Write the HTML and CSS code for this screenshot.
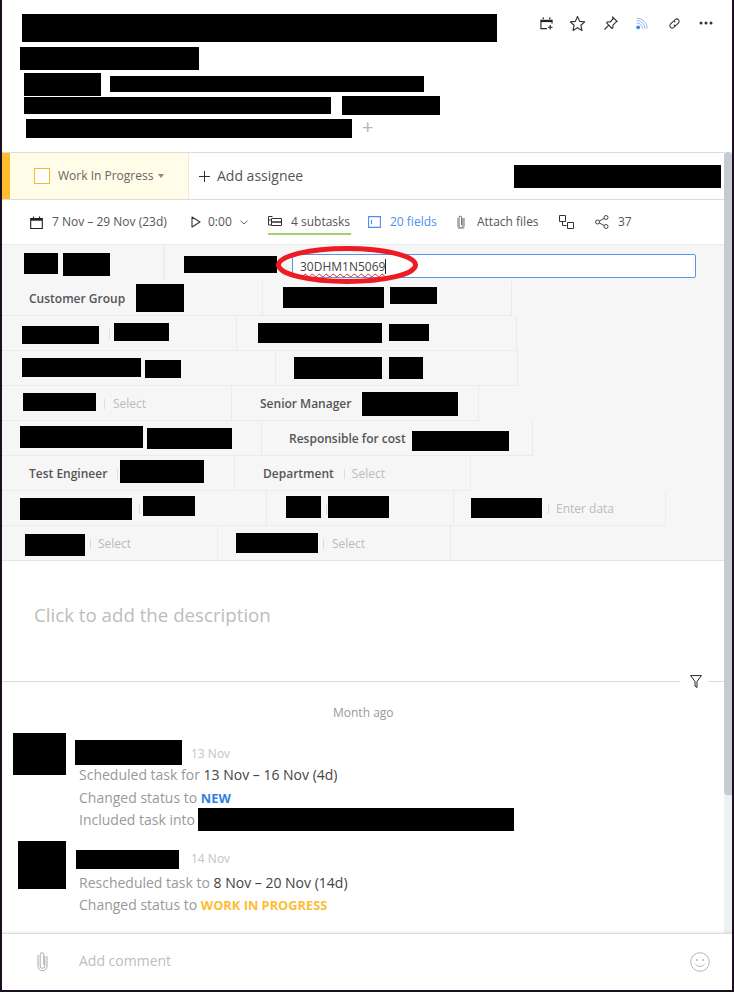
FILE: index.html
```html
<!DOCTYPE html>
<html lang="en">
<head>
<meta charset="utf-8">
<title>Task</title>
<link rel="stylesheet" href="styles.css">
</head>
<body>
<div class="panel">
  <header class="head">
    <div class="title">
      <div class="t-row t-a"><i class="bar tb1"></i></div>
      <div class="t-row t-b"><i class="bar tb2"></i></div>
      <div class="t-row t-c"><i class="bar tb3"></i><i class="bar tb4"></i></div>
      <div class="t-row t-d"><i class="bar tb5"></i><i class="bar tb6"></i></div>
      <div class="t-row t-e"><i class="bar tb7"></i><span class="plus">+</span></div>
    </div>
    <div class="actions">
      <svg class="ic a1" viewBox="0 0 14 14" width="13" height="13"><path d="M1 3h12v2.500H1z" fill="#222"/><path d="M3.500 .5v2M10.500 .5v2" stroke="#222" stroke-width="1.400"/><path d="M1 3v9.500h6.500M13 3v4" fill="none" stroke="#222" stroke-width="1.200"/><path d="M11 8.500v5M8.500 11h5" stroke="#222" stroke-width="1.200"/></svg>
      <svg class="ic a2" viewBox="0 0 16 16" width="17" height="17"><path d="M8 1.500l2 4.500 4.800.5-3.600 3.200 1 4.800L8 12.100 3.800 14.500l1-4.800L1.200 6.500 6 6z" fill="none" stroke="#333" stroke-width="1.100" stroke-linejoin="round"/></svg>
      <svg class="ic a3" viewBox="0 0 16 16" width="16" height="16"><path d="M9.500 1.800l4.700 4.700-1.300.6-3 3 .1 2.500-1 .9L3.600 7.900l.9-1 2.500.1 3-3zM5.800 10.200L1.500 14.500" fill="none" stroke="#333" stroke-width="1.100" stroke-linejoin="round"/></svg>
      <svg class="ic a4" viewBox="0 0 14 14" width="12" height="13"><circle cx="2.500" cy="11.500" r="2.200" fill="#3f83f0"/><path d="M1 6.500a6.500 6.500 0 0 1 6.500 6.500M1 3.500A9.500 9.500 0 0 1 10.500 13M1 .8A12.200 12.200 0 0 1 13.200 13" fill="none" stroke="#7fabf5" stroke-width="1"/></svg>
      <svg class="ic a5" viewBox="0 0 14 14" width="13" height="13"><path d="M6 4.500l2-2a2.600 2.600 0 0 1 3.600 3.600L9.500 8.300a2.600 2.600 0 0 1-3.400.3M8 9.500l-2 2a2.600 2.600 0 0 1-3.600-3.600l2.100-2.200a2.600 2.600 0 0 1 3.400-.3" fill="none" stroke="#333" stroke-width="1.100"/></svg>
      <svg class="ic a6" viewBox="0 0 14 4" width="14" height="4"><circle cx="2" cy="2" r="1.500" fill="#333"/><circle cx="7" cy="2" r="1.500" fill="#333"/><circle cx="12" cy="2" r="1.500" fill="#333"/></svg>
    </div>
  </header>

  <div class="scroll">
    <main class="content">
      <section class="status">
        <div class="state">
          <span class="check"></span>
          <span class="state-name">Work In Progress</span>
          <span class="caret"></span>
        </div>
        <div class="assignee">
          <svg viewBox="0 0 12 12" width="11" height="11"><path d="M6 0v12M0 6h12" stroke="#333" stroke-width="1.100"/></svg>
          <span>Add assignee</span>
        </div>
        <i class="bar st1"></i>
      </section>

      <nav class="tools">
        <div class="tool t-date">
          <svg viewBox="0 0 13 13" width="13" height="13"><path d="M.7 2.500h11.600v10H.7z" fill="none" stroke="#222" stroke-width="1.100"/><path d="M.7 2.500h11.600v2.200H.7z" fill="#222"/><path d="M3.500 .5v2M9.500 .5v2" stroke="#222" stroke-width="1.200"/></svg>
          <span>7 Nov – 29 Nov (23d)</span>
        </div>
        <div class="tool t-time">
          <svg viewBox="0 0 10 12" width="10" height="12"><path d="M1 1l8 5-8 5z" fill="none" stroke="#333" stroke-width="1.100" stroke-linejoin="round"/></svg>
          <span>0:00</span>
          <svg class="chev" viewBox="0 0 8 5" width="8" height="5"><path d="M.5 .7L4 4l3.500-3.300" fill="none" stroke="#666" stroke-width="1"/></svg>
        </div>
        <div class="tool t-sub">
          <svg viewBox="0 0 14 12" width="14" height="12"><path d="M.5 .5h4M.5 .5v8.500h3M.5 4h3M3.500 2.500h10v3.500h-10zM3.500 6h10v3.500h-10z" fill="none" stroke="#333" stroke-width="1"/></svg>
          <span>4 subtasks</span>
        </div>
        <div class="tool t-fields">
          <svg viewBox="0 0 13 12" width="13" height="12"><path d="M.6 .6h11.800v10.800H.6zM3.500 4v4" fill="none" stroke="#4d8ff0" stroke-width="1.100"/></svg>
          <span>20 fields</span>
        </div>
        <div class="tool t-attach">
          <svg viewBox="0 0 8 14" width="8" height="14"><path d="M6 3v8a2 2 0 0 1-4 0V2.500a1.300 1.300 0 0 1 2.600 0V10" fill="none" stroke="#555" stroke-width=".9"/><path d="M7.300 3v8a3.300 3.300 0 0 1-6.600 0V3" fill="none" stroke="#777" stroke-width=".7"/></svg>
          <span>Attach files</span>
        </div>
        <div class="tool t-link">
          <svg viewBox="0 0 15 14" width="15" height="14"><path d="M.5 .5h6v6h-6zM8.500 7.500h6v6h-6zM3.500 6.500v4h4" fill="none" stroke="#333" stroke-width="1"/></svg>
        </div>
        <div class="tool t-share">
          <svg viewBox="0 0 14 14" width="14" height="14"><circle cx="2.500" cy="7" r="2" fill="none" stroke="#444"/><circle cx="11" cy="2.500" r="2" fill="none" stroke="#444"/><circle cx="11" cy="11.500" r="2" fill="none" stroke="#444"/><path d="M4.300 6l5-2.600M4.300 8l5 2.600" stroke="#444"/></svg>
          <span>37</span>
        </div>
      </nav>

      <section class="fields">
        <div class="row row-first">
          <div class="cell c1a"><i class="bar f1"></i><i class="bar f2"></i></div>
          <div class="cell-edit">
            <i class="bar f3"></i>
            <div class="input"><span class="typed">30DHM1N5069</span><span class="cursor"></span></div>
            <svg class="mark" viewBox="0 0 142 38" width="142" height="38"><ellipse cx="71" cy="19" rx="68.500" ry="16.500" fill="none" stroke="#ed1c24" stroke-width="5"/></svg>
          </div>
        </div>
        <div class="row">
          <div class="cell c2a"><span class="label l-cg">Customer Group</span><i class="bar f4"></i></div>
          <div class="cell c2b"><i class="bar f5"></i><i class="bar f6"></i></div>
        </div>
        <div class="row">
          <div class="cell c3a"><i class="bar f7"></i><span class="sep s3"></span><i class="bar f8"></i></div>
          <div class="cell c3b"><i class="bar f9"></i><i class="bar f10"></i></div>
        </div>
        <div class="row">
          <div class="cell c4a"><i class="bar f11"></i><i class="bar f12"></i></div>
          <div class="cell c4b"><i class="bar f13"></i><i class="bar f14"></i></div>
        </div>
        <div class="row">
          <div class="cell c5a"><i class="bar f15"></i><span class="sep s5"></span><span class="hint">Select</span></div>
          <div class="cell c5b"><span class="label l-sm">Senior Manager</span><i class="bar f16"></i></div>
        </div>
        <div class="row">
          <div class="cell c6a"><i class="bar f17"></i><i class="bar f18"></i></div>
          <div class="cell c6b"><span class="label l-rc">Responsible for cost</span><i class="bar f19"></i></div>
        </div>
        <div class="row">
          <div class="cell c7a"><span class="label l-te">Test Engineer</span><span class="sep s7"></span><i class="bar f20"></i></div>
          <div class="cell c7b"><span class="label l-dp">Department</span><span class="sep s7b"></span><span class="hint">Select</span></div>
        </div>
        <div class="row">
          <div class="cell c8a"><i class="bar f21"></i><span class="sep s8"></span><i class="bar f22"></i></div>
          <div class="cell c8b"><i class="bar f23"></i><span class="sep s8b"></span><i class="bar f24"></i></div>
          <div class="cell c8c"><i class="bar f25"></i><span class="sep s8c"></span><span class="hint">Enter data</span></div>
        </div>
        <div class="row">
          <div class="cell c9a"><i class="bar f26"></i><span class="sep s9"></span><span class="hint">Select</span></div>
          <div class="cell c9b"><i class="bar f27"></i><span class="sep s9b"></span><span class="hint">Select</span></div>
        </div>
      </section>

      <section class="description">Click to add the description</section>

      <div class="rule">
        <span class="rule-line"></span>
        <svg viewBox="0 0 12 13" width="12" height="13"><path d="M.6 .6h10.800L7 6.500V12.500L5 11V6.500z" fill="none" stroke="#222" stroke-width="1" stroke-linejoin="round"/></svg>
        <span class="rule-end"></span>
      </div>

      <div class="when">Month ago</div>

      <article class="entry e1">
        <i class="bar av1"></i>
        <div class="entry-body">
          <div class="who"><i class="bar n1"></i><time>13 Nov</time></div>
          <p>Scheduled task for <b>13 Nov – 16 Nov (4d)</b></p>
          <p>Changed status to <strong class="new">NEW</strong></p>
          <p class="incl">Included task into<i class="bar n3"></i></p>
        </div>
      </article>

      <article class="entry e2">
        <i class="bar av2"></i>
        <div class="entry-body">
          <div class="who who2"><i class="bar n2"></i><time>14 Nov</time></div>
          <p>Rescheduled task to <b>8 Nov – 20 Nov (14d)</b></p>
          <p>Changed status to <strong class="wip">WORK IN PROGRESS</strong></p>
        </div>
      </article>
    </main>
    <div class="scrollbar"><div class="thumb"></div></div>
  </div>

  <footer class="comment">
    <svg class="clip" viewBox="0 0 11 20" width="11" height="20"><path d="M7.800 5v10a2.300 2.300 0 0 1-4.600 0V3.500a1.800 1.800 0 0 1 3.600 0V14" fill="none" stroke="#aaa" stroke-width="1"/><path d="M10 5v10.200a4.500 4.500 0 0 1-9 0V4" fill="none" stroke="#aaa" stroke-width="1"/></svg>
    <span class="add">Add comment</span>
    <svg class="smile" viewBox="0 0 20 20" width="20" height="20"><circle cx="10" cy="10" r="9.300" fill="none" stroke="#b5b5b5" stroke-width="1"/><circle cx="6.800" cy="8" r="1" fill="#b5b5b5"/><circle cx="13.200" cy="8" r="1" fill="#b5b5b5"/><path d="M5.500 12.300c2.500 2.800 6.500 2.800 9 0" fill="none" stroke="#b5b5b5" stroke-width="1"/></svg>
  </footer>
</div>
</body>
</html>
```

FILE: styles.css
```css
* { box-sizing: border-box; }
html, body { margin: 0; height: 992px; overflow: hidden; }
body { background: #1c1020; font-family: "Open Sans", "Liberation Sans", sans-serif; color: #555; font-size: 12px; }
.panel { margin-left: 2px; width: 730px; height: 990px; background: #fff; display: flex; flex-direction: column; }
.bar { display: block; background: #000; flex: none; }

/* header */
.head { height: 152px; flex: none; display: flex; justify-content: space-between; }
.title { width: 520px; }
.t-row { display: flex; align-items: flex-start; }
.t-a { margin: 14px 0 0 20px; }
.t-b { margin: 5px 0 0 18px; }
.t-c { margin: 3px 0 0 22px; }
.t-d { margin: 0 0 0 22px; }
.t-e { margin: 4px 0 0 24px; }
.tb1 { width: 475px; height: 28px; }
.tb2 { width: 179px; height: 23px; }
.tb3 { width: 77px; height: 23px; }
.tb4 { width: 314px; height: 16px; margin: 3px 0 0 9px; }
.tb5 { width: 307px; height: 17px; margin: 1px 0 0 0; }
.tb6 { width: 98px; height: 19px; margin-left: 11px; }
.tb7 { width: 326px; height: 19px; }
.plus { margin-left: 10px; font-size: 20px; line-height: 16px; color: #b5b5b5; }
.actions { display: flex; align-items: center; height: 16px; margin: 15px 19px 0 0; }
.ic { display: block; flex: none; }
.a2 { margin-left: 16px; }
.a3 { margin-left: 17px; }
.a4 { margin-left: 17px; }
.a5 { margin-left: 20px; }
.a6 { margin-left: 18px; }

/* scrolling part */
.scroll { height: 781px; flex: none; display: flex; overflow: hidden; }
.content { width: 722px; flex: none; }
.scrollbar { width: 8px; flex: none; background: #eef0f2; }
.thumb { height: 643px; background: #c6cad2; border-radius: 4px 4px 0 4px; }

/* status */
.status { height: 48px; display: flex; align-items: center; border-top: 1px solid #dcdcdc; border-bottom: 1px solid #dcdcdc; }
.state { width: 187px; height: 100%; display: flex; align-items: center; background: #fffce8; border-left: 8px solid #fdbd2d; border-right: 1px solid #f1eecf; padding-left: 24px; }
.check { width: 16px; height: 16px; border: 1px solid #f7bb2e; background: #fff; }
.state-name { margin: 0 0 2px 8px; color: #666; }
.caret { margin-left: 5px; border: 3px solid transparent; border-top: 4px solid #888; border-bottom: 0; }
.assignee { display: flex; align-items: center; margin-left: 10px; font-size: 14px; color: #555; width: 315px; }
.assignee span { margin: 0 0 2px 7px; }
.st1 { width: 207px; height: 23px; }

/* tools */
.tools { height: 45px; display: flex; align-items: center; padding-left: 28px; border-bottom: 1px solid #ececec; color: #555; }
.tool { display: flex; align-items: center; height: 100%; flex: none; }
.tool span { white-space: nowrap; margin-bottom: 2px; }
.t-date { width: 161px; }
.t-date span { margin-left: 9px; }
.t-time { width: 77px; }
.t-time span { margin-left: 7px; }
.chev { margin-left: 8px; }
.t-sub { width: 83px; position: relative; margin-right: 17px; }
.t-sub::after { content: ""; position: absolute; left: 0; right: 0; bottom: 9px; height: 2px; background: #a3d06b; }
.t-sub span { margin-left: 9px; }
.t-fields { width: 89px; color: #4d8ff0; }
.t-fields span { margin-left: 9px; }
.t-attach { width: 102px; }
.t-attach span { margin-left: 12px; }
.t-link { width: 36px; }
.t-share span { margin-left: 9px; }

/* fields */
.fields { height: 316px; background: #f6f6f6; border-bottom: 1px solid #e4e4e4; }
.row { display: flex; height: 35px; }
.row-first { height: 36px; position: relative; }
.cell { display: flex; align-items: flex-start; height: 35px; flex: none; border-right: 1px solid #ebebeb; border-bottom: 1px solid #ebebeb; }
.label { line-height: 36px; font-weight: 600; color: #555; white-space: nowrap; }
.hint { line-height: 36px; color: #bbb; white-space: nowrap; }
.sep { width: 1px; height: 10px; margin-top: 13px; background: #ddd; flex: none; }

.c1a { width: 161px; height: 36px; border: 0; box-shadow: 2px 0 2px -1px #e6e6e6; }
.f1 { width: 34px; height: 21px; margin: 8px 0 0 22px; }
.f2 { width: 47px; height: 23px; margin: 8px 0 0 5px; }
.cell-edit { flex: 1; display: flex; align-items: flex-start; position: relative; }
.f3 { width: 93px; height: 17px; margin: 11px 0 0 21px; }
.input { width: 404px; height: 24px; margin: 9px 0 0 15px; background: #fff; border: 1px solid #5b95ea; border-radius: 2px; padding-left: 7px; display: flex; align-items: center; color: #444; }
.typed { text-decoration: underline wavy #e02020 1px; text-underline-offset: 2px; text-decoration-skip-ink: none; }
.cursor { width: 1px; height: 15px; background: #222; }
.mark { position: absolute; left: 113px; top: 1px; }

.c2a { width: 261px; }
.l-cg { margin-left: 27px; }
.f4 { width: 48px; height: 28px; margin: 3px 0 0 11px; }
.c2b { width: 249px; }
.f5 { width: 101px; height: 21px; margin: 6px 0 0 20px; }
.f6 { width: 47px; height: 17px; margin: 6px 0 0 6px; }

.c3a { width: 235px; }
.f7 { width: 77px; height: 18px; margin: 10px 0 0 20px; }
.s3 { margin-left: 10px; }
.f8 { width: 55px; height: 18px; margin: 7px 0 0 4px; }
.c3b { width: 280px; }
.f9 { width: 124px; height: 20px; margin: 7px 0 0 21px; }
.f10 { width: 40px; height: 17px; margin: 8px 0 0 7px; }

.c4a { width: 274px; }
.f11 { width: 119px; height: 19px; margin: 7px 0 0 20px; }
.f12 { width: 36px; height: 18px; margin: 9px 0 0 4px; }
.c4b { width: 242px; }
.f13 { width: 88px; height: 22px; margin: 6px 0 0 18px; }
.f14 { width: 34px; height: 22px; margin: 6px 0 0 7px; }

.c5a { width: 230px; }
.f15 { width: 73px; height: 18px; margin: 7px 0 0 21px; }
.s5 { margin-left: 8px; margin-right: 8px; }
.c5b { width: 247px; }
.l-sm { margin-left: 28px; }
.f16 { width: 96px; height: 24px; margin: 6px 0 0 11px; }

.c6a { width: 260px; }
.f17 { width: 123px; height: 22px; margin: 5px 0 0 18px; }
.f18 { width: 85px; height: 21px; margin: 7px 0 0 4px; }
.c6b { width: 271px; }
.l-rc { margin-left: 27px; }
.f19 { width: 97px; height: 20px; margin: 10px 0 0 6px; }

.c7a { width: 233px; }
.l-te { margin-left: 27px; }
.s7 { margin-left: 10px; }
.f20 { width: 84px; height: 23px; margin: 4px 0 0 2px; }
.c7b { width: 236px; }
.l-dp { margin-left: 28px; }
.s7b { margin-left: 10px; margin-right: 7px; }

.c8a { width: 265px; }
.f21 { width: 112px; height: 22px; margin: 7px 0 0 18px; }
.s8 { margin-left: 7px; }
.f22 { width: 52px; height: 20px; margin: 5px 0 0 3px; }
.c8b { width: 187px; }
.f23 { width: 35px; height: 22px; margin: 5px 0 0 19px; }
.s8b { margin-left: 5px; }
.f24 { width: 61px; height: 22px; margin: 5px 0 0 1px; }
.c8c { width: 212px; }
.f25 { width: 71px; height: 20px; margin: 7px 0 0 17px; }
.s8c { margin-left: 6px; margin-right: 7px; }

.c9a { width: 216px; border-bottom: 0; }
.f26 { width: 60px; height: 22px; margin: 8px 0 0 23px; }
.s9 { margin-left: 5px; margin-right: 7px; }
.c9b { width: 233px; border-bottom: 0; }
.f27 { width: 82px; height: 20px; margin: 7px 0 0 18px; }
.s9b { margin-left: 5px; margin-right: 8px; }

/* description */
.description { height: 120px; padding: 42px 0 0 32px; font-size: 18.700px; line-height: 24px; color: #bdbdbd; }

/* activity */
.rule { display: flex; align-items: center; height: 13px; margin-top: -6px; }
.rule-line { width: 678px; height: 1px; background: #dcdcdc; }
.rule svg { margin-left: 10px; flex: none; }
.rule-end { flex: 1; height: 1px; margin-left: 6px; background: #dcdcdc; }
.when { margin-top: 17px; padding-left: 331px; font-size: 12px; line-height: 16px; color: #999; }
.entry { display: flex; align-items: flex-start; }
.e1 { margin: 12px 0 0 11px; height: 108px; }
.e2 { margin-left: 16px; }
.av1 { width: 53px; height: 42px; }
.av2 { width: 48px; height: 48px; }
.entry-body { margin-left: 9px; font-size: 14px; }
.e2 .entry-body { margin-left: 10px; }
.who { display: flex; align-items: flex-end; height: 32px; padding-top: 7px; margin-bottom: -1px; }
.who2 { height: 28px; padding-top: 9px; margin-bottom: 3px; }
.n1 { width: 107px; height: 25px; }
.n2 { width: 103px; height: 19px; }
time { margin: 0 0 2px 9px; font-size: 12px; line-height: 18px; color: #c4c4c4; }
.who2 time { margin: 0 0 1px 12px; }
.entry p { margin: 0 0 0 4px; height: 22.500px; line-height: 22px; color: #999; white-space: nowrap; }
.e2 p { margin-left: 3px; height: 22px; }
.entry-body p.incl { display: flex; }
.entry b { font-weight: 400; color: #444; }
.new { color: #2f80e0; font-weight: 700; font-size: 12.800px; }
.wip { color: #fdbd33; font-weight: 700; font-size: 12.800px; }
.n3 { width: 316px; height: 23px; margin: -1px 0 0 3px; }

/* comment */
.comment { flex: 1; position: relative; display: flex; align-items: center; border-top: 1px solid #ddd; box-shadow: 0 -1px 2px rgba(0,0,0,.08); padding-left: 35px; }
.add { margin: 0 0 3px 31px; font-size: 14px; color: #bdbdbd; }
.clip { margin-bottom: 2px; }
.smile { margin-left: auto; margin-right: 22px; }
```
